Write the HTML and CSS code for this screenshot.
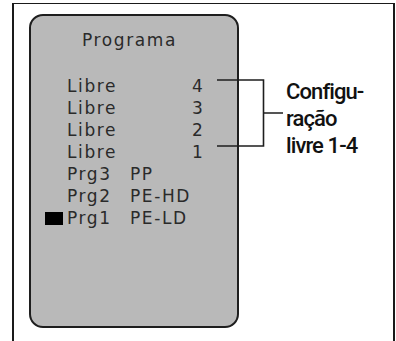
FILE: index.html
```html
<!DOCTYPE html>
<html>
<head>
<meta charset="utf-8">
<link rel="stylesheet" href="styles.css">
</head>
<body>
<div class="frame">
  <div class="panel">
    <div class="title">Programa</div>
    <div class="rows">
      <div class="row"><span class="name">Libre</span><span class="num">4</span></div>
      <div class="row"><span class="name">Libre</span><span class="num">3</span></div>
      <div class="row"><span class="name">Libre</span><span class="num">2</span></div>
      <div class="row"><span class="name">Libre</span><span class="num">1</span></div>
      <div class="row"><span class="prg">Prg3</span><span class="mat">PP</span></div>
      <div class="row"><span class="prg">Prg2</span><span class="mat">PE-HD</span></div>
      <div class="row sel"><span class="cursor"></span><span class="prg">Prg1</span><span class="mat">PE-LD</span></div>
    </div>
  </div>
  <div class="label">Configu-<br>ração<br>livre 1-4</div>
  <svg class="bracket" width="80" height="80" viewBox="0 0 80 80">
    <path d="M0 1 H46.5 V67 H0 M46.5 34 H66" fill="none" stroke="#1e1e1e" stroke-width="1.6"/>
  </svg>
</div>
</body>
</html>
```
FILE: styles.css
```css
html, body {
  margin: 0;
  padding: 0;
  background: #fff;
}
body {
  width: 396px;
  height: 341px;
  overflow: hidden;
}
.frame {
  position: relative;
  margin: 3px 0 0 12px;
  width: 383px;
  height: 338px;
  border: 2px solid #1a1a1a;
  border-bottom: none;
  border-top-width: 1.5px;
  display: flex;
  align-items: flex-start;
  padding: 10px 0 0 15px;
  box-sizing: border-box;
}
.panel {
  width: 210px;
  height: 314px;
  box-sizing: border-box;
  background: #b9b9b9;
  border: 2px solid #1e1e1e;
  border-radius: 14px;
  font-family: "DejaVu Sans", Verdana, sans-serif;
  font-size: 17px;
  letter-spacing: 1.6px;
  color: #2a2a2a;
  padding: 13px 0 0 36px;
}
.title {
  line-height: 22px;
  margin-left: 15px;
  height: 22px;
}
.rows {
  margin-top: 24px;
}
.row {
  display: flex;
  height: 22px;
  line-height: 22px;
  position: relative;
}
.name {
  width: 125px;
}
.prg {
  width: 63px;
}
.cursor {
  position: absolute;
  left: -22px;
  top: 5px;
  width: 18px;
  height: 13px;
  background: #000;
}
.label {
  margin: 64px 0 0 47px;
  font-family: "Roboto", sans-serif;
  font-weight: 500;
  font-size: 22px;
  letter-spacing: -0.9px;
  line-height: 27px;
  color: #111;
}
.bracket {
  position: absolute;
  left: 203px;
  top: 75px;
  overflow: visible;
}
```
